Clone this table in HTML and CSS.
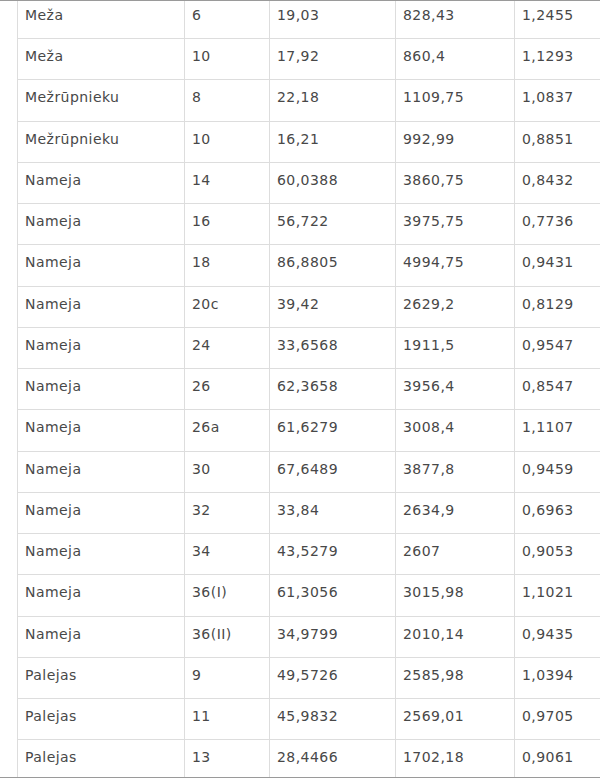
FILE: index.html
```html
<!DOCTYPE html>
<html>
<head>
<meta charset="utf-8">
<link rel="stylesheet" href="styles.css">
</head>
<body>
<div class="frame">
<table class="data">
<colgroup><col class="c1"><col class="c2"><col class="c3"><col class="c4"><col class="c5"></colgroup>
<tbody>
<tr><td>Meža</td><td>6</td><td>19,03</td><td>828,43</td><td>1,2455</td></tr>
<tr><td>Meža</td><td>10</td><td>17,92</td><td>860,4</td><td>1,1293</td></tr>
<tr><td>Mežrūpnieku</td><td>8</td><td>22,18</td><td>1109,75</td><td>1,0837</td></tr>
<tr><td>Mežrūpnieku</td><td>10</td><td>16,21</td><td>992,99</td><td>0,8851</td></tr>
<tr><td>Nameja</td><td>14</td><td>60,0388</td><td>3860,75</td><td>0,8432</td></tr>
<tr><td>Nameja</td><td>16</td><td>56,722</td><td>3975,75</td><td>0,7736</td></tr>
<tr><td>Nameja</td><td>18</td><td>86,8805</td><td>4994,75</td><td>0,9431</td></tr>
<tr><td>Nameja</td><td>20c</td><td>39,42</td><td>2629,2</td><td>0,8129</td></tr>
<tr><td>Nameja</td><td>24</td><td>33,6568</td><td>1911,5</td><td>0,9547</td></tr>
<tr><td>Nameja</td><td>26</td><td>62,3658</td><td>3956,4</td><td>0,8547</td></tr>
<tr><td>Nameja</td><td>26a</td><td>61,6279</td><td>3008,4</td><td>1,1107</td></tr>
<tr><td>Nameja</td><td>30</td><td>67,6489</td><td>3877,8</td><td>0,9459</td></tr>
<tr><td>Nameja</td><td>32</td><td>33,84</td><td>2634,9</td><td>0,6963</td></tr>
<tr><td>Nameja</td><td>34</td><td>43,5279</td><td>2607</td><td>0,9053</td></tr>
<tr><td>Nameja</td><td>36(I)</td><td>61,3056</td><td>3015,98</td><td>1,1021</td></tr>
<tr><td>Nameja</td><td>36(II)</td><td>34,9799</td><td>2010,14</td><td>0,9435</td></tr>
<tr><td>Palejas</td><td>9</td><td>49,5726</td><td>2585,98</td><td>1,0394</td></tr>
<tr><td>Palejas</td><td>11</td><td>45,9832</td><td>2569,01</td><td>0,9705</td></tr>
<tr><td>Palejas</td><td>13</td><td>28,4466</td><td>1702,18</td><td>0,9061</td></tr>
</tbody>
</table>
</div>
</body>
</html>
```
FILE: styles.css
```css
html, body {
  margin: 0;
  padding: 0;
  background: #fff;
  overflow: hidden;
}
.frame {
  width: 600px;
  height: 776px;
  border-top: 1px solid #9a9a9a;
  border-bottom: 1px solid #9a9a9a;
  overflow: hidden;
  padding-left: 17px;
  box-sizing: content-box;
}
.data {
  border-collapse: collapse;
  table-layout: fixed;
  width: 720px;
  margin-top: -4px;
  font-family: "DejaVu Sans", Verdana, sans-serif;
  font-size: 14px;
  letter-spacing: 0.45px;
  color: #484848;
}
.c1 { width: 167px; }
.c2 { width: 85px; }
.c3 { width: 126px; }
.c4 { width: 119px; }
.c5 { width: 223px; }
.data td {
  border: 1px solid #ddd;
  padding: 7px 7px 13px;
  line-height: 20.24px;
  text-align: left;
  white-space: nowrap;
}
```
